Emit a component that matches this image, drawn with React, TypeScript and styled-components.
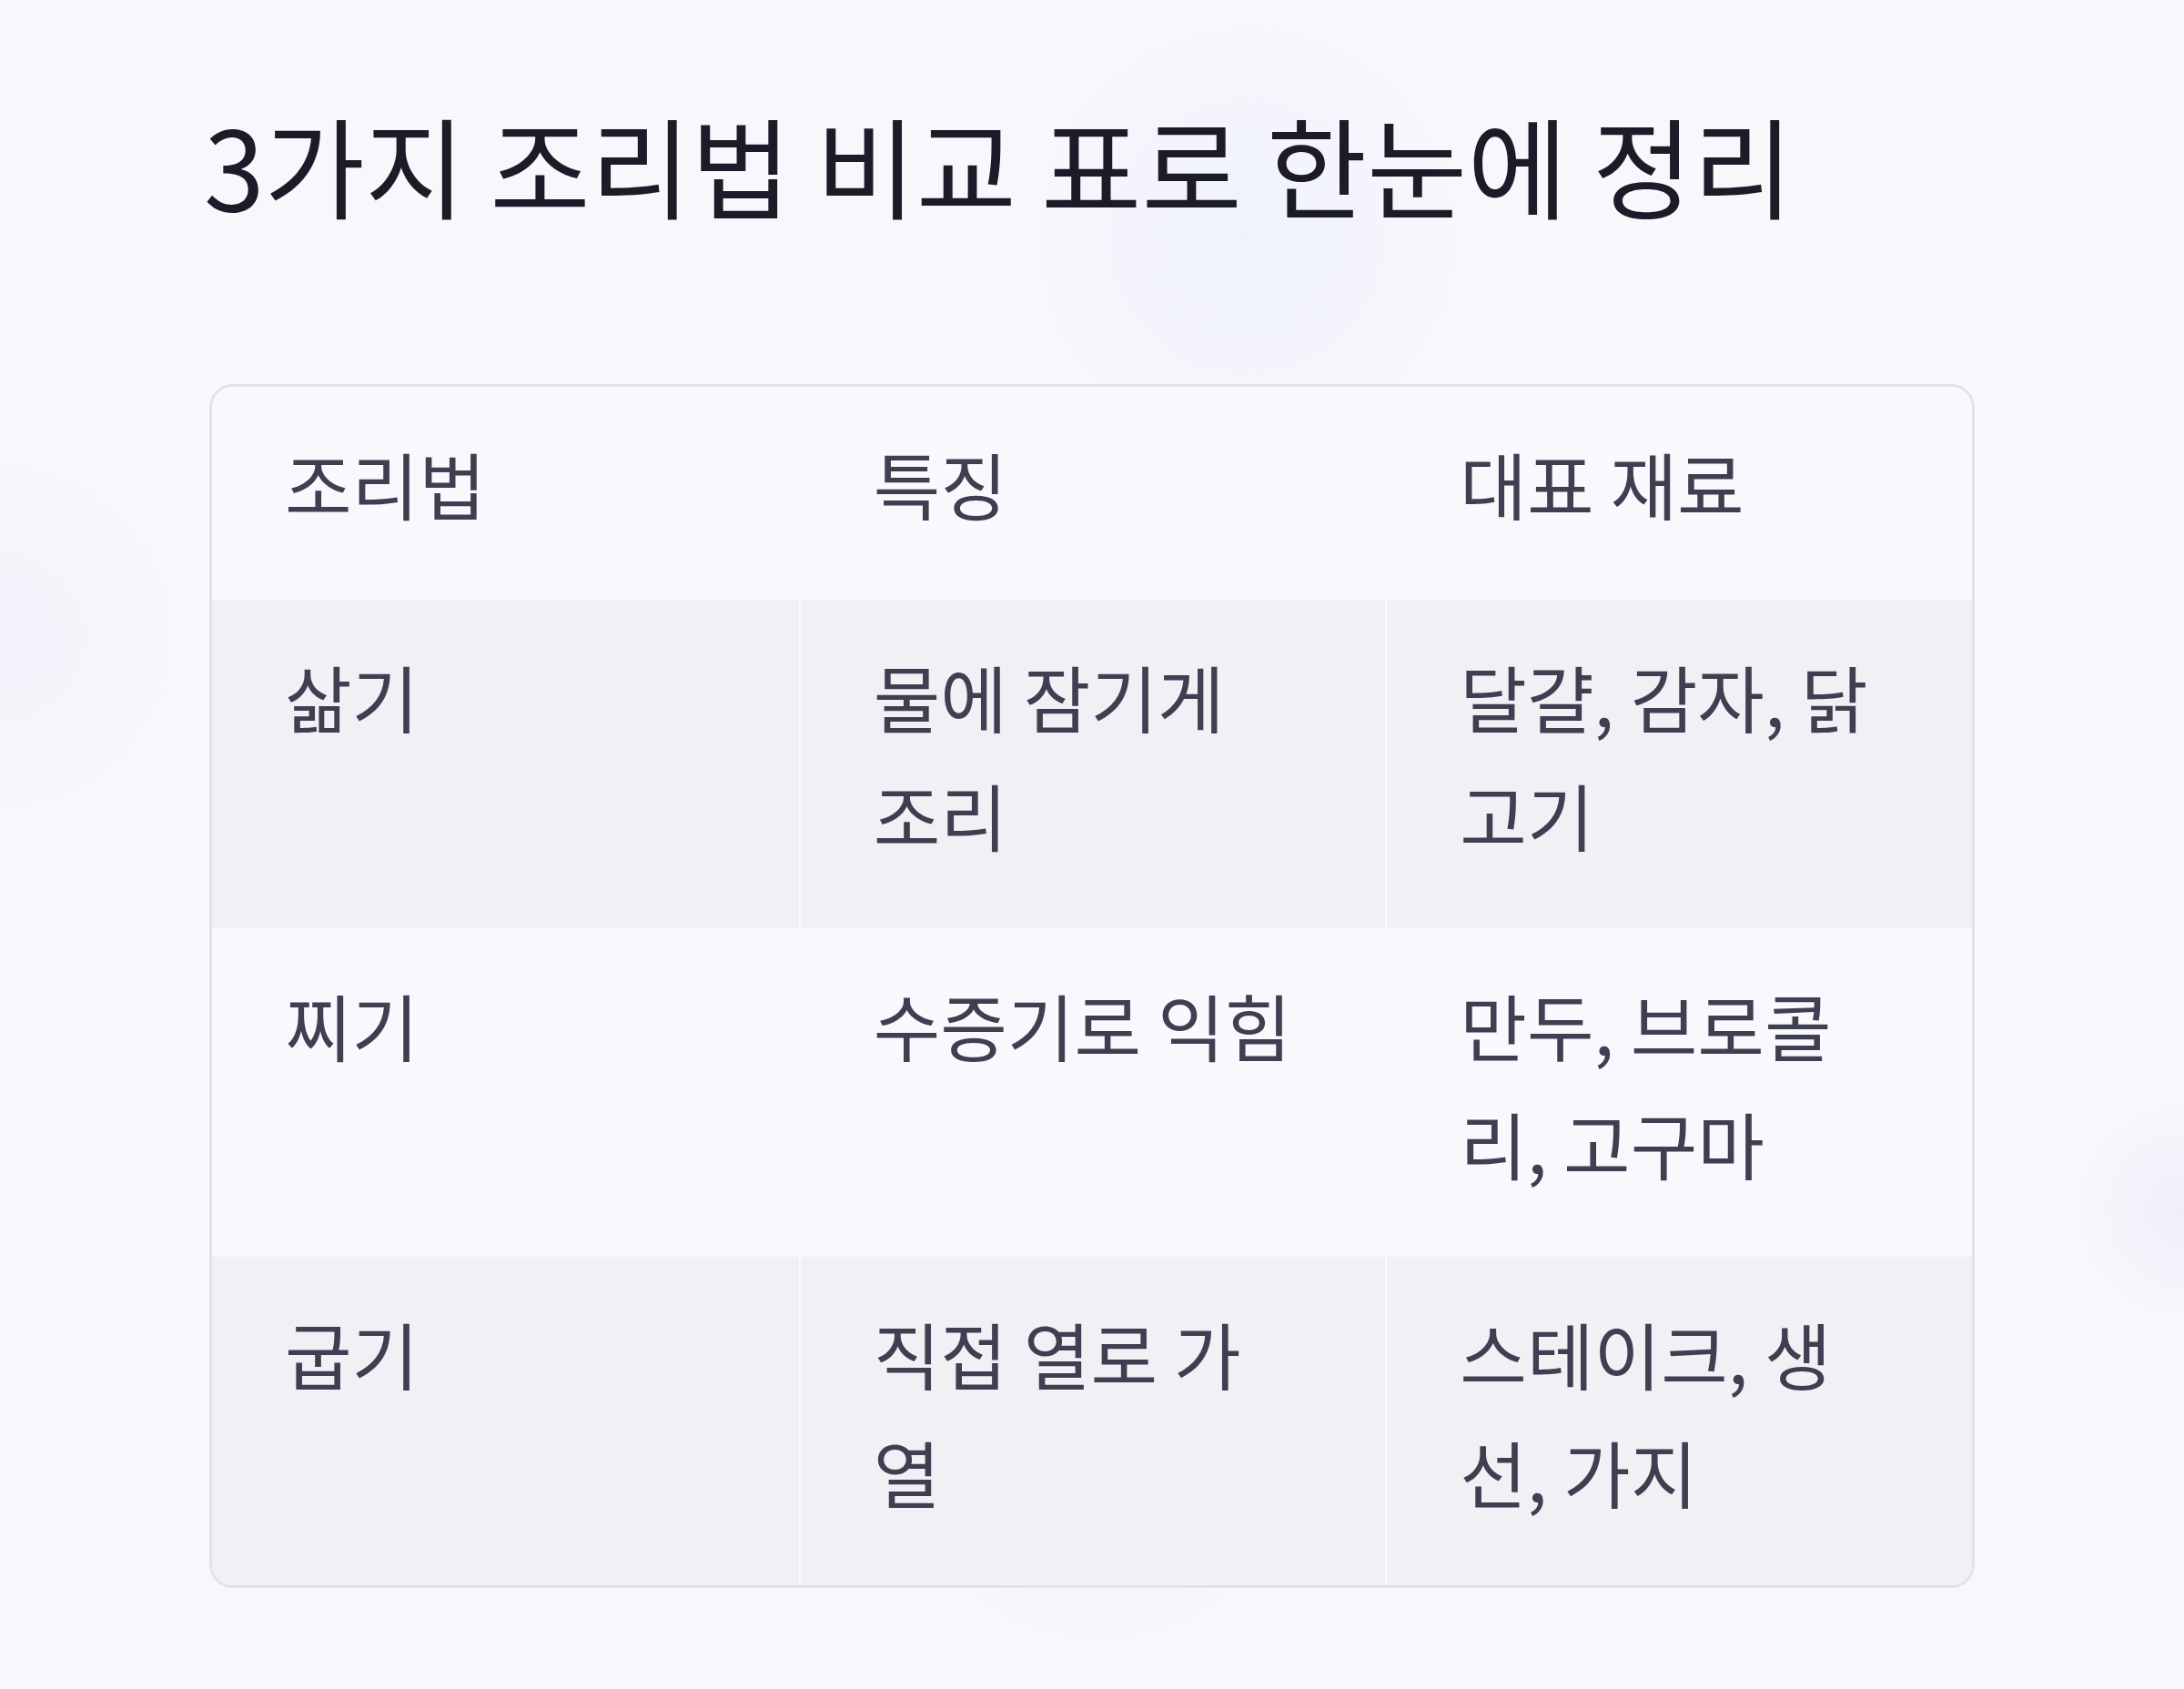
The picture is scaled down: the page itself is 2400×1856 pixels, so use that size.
import { createGlobalStyle, styled } from 'styled-components';

const GlobalStyle = createGlobalStyle`
  html, body {
    margin: 0;
    padding: 0;
  }
  body {
    background: #f7f7fc;
    font-family: "Noto Sans CJK KR", "Noto Sans", sans-serif;
  }
`;

const Page = styled.div`
  min-height: 1856px;
  box-sizing: border-box;
  padding: 108px 230px 0 230px;
  background:
    radial-gradient(circle at 1210px 1580px, rgba(228, 230, 246, 0.5) 0, rgba(228, 230, 246, 0) 230px),
    radial-gradient(circle at 1370px 260px, rgba(234, 238, 252, 0.55) 0, rgba(234, 238, 252, 0) 240px),
    radial-gradient(circle at 2400px 1330px, rgba(232, 234, 248, 0.6) 0, rgba(232, 234, 248, 0) 120px),
    radial-gradient(circle at 0 700px, rgba(236, 238, 250, 0.45) 0, rgba(236, 238, 250, 0) 200px),
    #f7f7fc;
`;

const Title = styled.h1`
  margin: 0 0 0 -6px;
  font-size: 120px;
  font-weight: 400;
  line-height: 1.2;
  color: #1c1c28;
`;

const Card = styled.div`
  margin-top: 170px;
  border: 3px solid #e2e2e8;
  border-radius: 26px;
  overflow: hidden;
  background: #f8f8fd;
`;

const Row = styled.div<{ $shaded?: boolean }>`
  display: grid;
  grid-template-columns: repeat(3, 1fr);
  background: ${({ $shaded }) => ($shaded ? '#f0f0f5' : '#f8f8fd')};
`;

const Cell = styled.div<{ $divider?: boolean; $head?: boolean }>`
  padding: 40px 88px ${({ $head }) => ($head ? '64px' : '61px')} 80px;
  font-size: 80px;
  line-height: 130px;
  color: #3f3f52;
  border-left: 2px solid ${({ $divider }) => ($divider ? '#fafafd' : 'transparent')};
  &:first-child {
    border-left: none;
  }
`;

const rows = [
  ['삶기', '물에 잠기게 조리', '달걀, 감자, 닭고기'],
  ['찌기', '수증기로 익힘', '만두, 브로콜리, 고구마'],
  ['굽기', '직접 열로 가열', '스테이크, 생선, 가지'],
];

function App() {
  return (
    <Page>
      <GlobalStyle />
      <Title>3가지 조리법 비교 표로 한눈에 정리</Title>
      <Card>
        <Row>
          <Cell $head>조리법</Cell>
          <Cell $head>특징</Cell>
          <Cell $head>대표 재료</Cell>
        </Row>
        {rows.map((row, i) => (
          <Row key={i} $shaded={i % 2 === 0}>
            {row.map((text, j) => (
              <Cell key={j} $divider>{text}</Cell>
            ))}
          </Row>
        ))}
      </Card>
    </Page>
  );
}

export default App;
